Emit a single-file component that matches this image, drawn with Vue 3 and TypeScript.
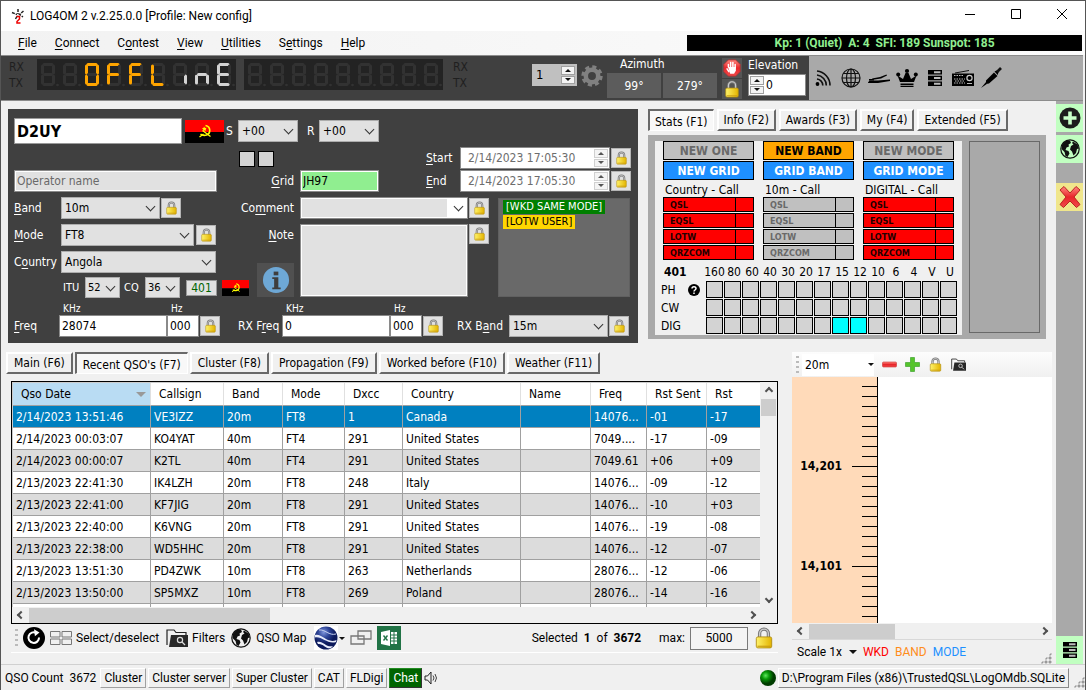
<script setup lang="ts">
import { ref } from 'vue'

type Accel = [string, string, string]

const menu: Accel[] = [
  ['', 'F', 'ile'],
  ['', 'C', 'onnect'],
  ['C', 'o', 'ntest'],
  ['', 'V', 'iew'],
  ['', 'U', 'tilities'],
  ['S', 'e', 'ttings'],
  ['', 'H', 'elp'],
]

const segmentPaths: Record<string, string> = {
  a: 'M3 1.5H11',
  b: 'M12.5 3V10',
  c: 'M12.5 13V20',
  d: 'M3 21.5H11',
  e: 'M1.5 13V20',
  f: 'M1.5 3V10',
  g: 'M3.5 11.5H10.5',
}
const segmentNames = Object.keys(segmentPaths)
const glyphs: Record<string, string> = { O: 'abcdef', F: 'aefg', L: 'def', i: 'c', n: 'ceg', E: 'adefg', ' ': '' }

interface Digit { on: string; color: string }
const toDigits = (text: string): Digit[] =>
  text.split('').map((ch) => ({ on: glyphs[ch] ?? '', color: ch === 'i' || ch === 'n' || ch === 'E' ? '#d3d3d3' : '#ffa500' }))
const displays: Digit[][] = [toDigits('  OFFLinE'), toDigits('         ')]

const tools = [
  { id: 'i-feed', name: 'Cluster feed' },
  { id: 'i-globe', name: 'Web' },
  { id: 'i-key', name: 'Keyer' },
  { id: 'i-crown', name: 'Awards' },
  { id: 'i-server', name: 'Server' },
  { id: 'i-radio', name: 'Radio' },
  { id: 'i-jack', name: 'Audio' },
]

const statTabs = ['Stats (F1)', 'Info (F2)', 'Awards (F3)', 'My (F4)', 'Extended (F5)']
const logTabs = ['Main (F6)', "Recent QSO's (F7)", 'Cluster (F8)', 'Propagation (F9)', 'Worked before (F10)', 'Weather (F11)']
const statTab = ref(0)
const logTab = ref(1)

const statColumns = [
  { head: 'NEW ONE', headClass: 'off', grid: 'NEW GRID', label: 'Country - Call', hit: true },
  { head: 'NEW BAND', headClass: 'new', grid: 'GRID BAND', label: '10m - Call', hit: false },
  { head: 'NEW MODE', headClass: 'off', grid: 'GRID MODE', label: 'DIGITAL - Call', hit: true },
]
const confirmations = ['QSL', 'EQSL', 'LOTW', 'QRZCOM']
const bands = ['160', '80', '60', '40', '30', '20', '17', '15', '12', '10', '6', '4', 'V', 'U']
const modeRows = [
  { name: 'PH', worked: [] as number[] },
  { name: 'CW', worked: [] as number[] },
  { name: 'DIG', worked: [7, 8] },
]

const columns = ['Qso Date', 'Callsign', 'Band', 'Mode', 'Dxcc', 'Country', 'Name', 'Freq', 'Rst Sent', 'Rst']
const rows: string[][] = [
  ['2/14/2023 13:51:46', 'VE3IZZ', '20m', 'FT8', '1', 'Canada', '', '14076...', '-01', '-17'],
  ['2/14/2023 00:03:07', 'KO4YAT', '40m', 'FT4', '291', 'United States', '', '7049....', '-17', '-09'],
  ['2/14/2023 00:00:07', 'K2TL', '40m', 'FT4', '291', 'United States', '', '7049.61', '+06', '+09'],
  ['2/13/2023 22:41:30', 'IK4LZH', '20m', 'FT8', '248', 'Italy', '', '14076...', '-09', '-12'],
  ['2/13/2023 22:41:00', 'KF7JIG', '20m', 'FT8', '291', 'United States', '', '14076...', '-10', '+03'],
  ['2/13/2023 22:40:00', 'K6VNG', '20m', 'FT8', '291', 'United States', '', '14076...', '-19', '-08'],
  ['2/13/2023 22:38:00', 'WD5HHC', '20m', 'FT8', '291', 'United States', '', '14076...', '-12', '-07'],
  ['2/13/2023 13:51:30', 'PD4ZWK', '10m', 'FT8', '263', 'Netherlands', '', '28076...', '-12', '-06'],
  ['2/13/2023 13:50:00', 'SP5MXZ', '10m', 'FT8', '269', 'Poland', '', '28076...', '-14', '-16'],
  ['', '', '', '', '', '', '', '', '', ''],
]
const selected = ref(0)

const ticks = Array.from({ length: 24 }, (_, i) => ({ label: i === 8 ? '14,201' : i === 18 ? '14,101' : '' }))

const statusButtons = ['Cluster', 'Cluster server', 'Super Cluster', 'CAT', 'FLDigi']

const callsign = ref('D2UY')
const operator = ref('')
const grid = ref('JH97')
const comment = ref('')
const note = ref('')
const startAt = ref('2/14/2023 17:05:30')
const endAt = ref('2/14/2023 17:05:30')
const freq = ref('28074')
const freqHz = ref('000')
const rxFreq = ref('0')
const rxFreqHz = ref('000')
const rotator = ref('1')
const elevation = ref('0')
const maxRows = ref('5000')
</script>

<template>
  <div class="window">
    <svg class="defs" aria-hidden="true">
      <defs>
        <linearGradient id="g-gold" x1="0" x2="1"><stop offset="0" stop-color="#fff36a" /><stop offset="1" stop-color="#e3b400" /></linearGradient>
        <linearGradient id="g-red" x1="0" x2="0" y1="0" y2="1"><stop offset="0" stop-color="#ff8a80" /><stop offset="0.5" stop-color="#e8262b" /><stop offset="1" stop-color="#f04a4a" /></linearGradient>
        <radialGradient id="g-led" cx="0.35" cy="0.35"><stop offset="0" stop-color="#5ee85e" /><stop offset="0.45" stop-color="#089a08" /><stop offset="1" stop-color="#003c00" /></radialGradient>
        <radialGradient id="g-blue" cx="0.4" cy="0.25"><stop offset="0" stop-color="#7f96dc" /><stop offset="0.5" stop-color="#2c4396" /><stop offset="1" stop-color="#0c1a5c" /></radialGradient>
        <symbol id="i-lock" viewBox="0 0 16 20">
          <path d="M4 10V6a4 4 0 0 1 8 0v4" fill="none" stroke="#777" stroke-width="3" />
          <path d="M4 10V6a4 4 0 0 1 8 0v4" fill="none" stroke="#ccc" stroke-width="1.2" />
          <rect x="1" y="9" width="14" height="10" rx="1.5" fill="url(#g-gold)" stroke="#b08c10" stroke-width="0.8" />
          <path d="M2 17.500H14" stroke="#c99a10" stroke-width="1" />
        </symbol>
        <symbol id="i-angola" viewBox="0 0 39 23">
          <path d="M0 0H39V12H0z" fill="#f00" /><path d="M0 12H39V23H0z" fill="#000" />
          <g fill="none" stroke="#ff0"><path d="M20.500 5.500c5.500 1 5.500 8 1 9.500c-2 .6-4.500 .2-6-1" stroke-width="1.600" /><path d="M14.500 17l4-3M17.500 10.500l8 6" stroke-width="1.300" /></g>
          <path d="M19 6.500l1 1.400 1.600-.1-.9 1.400.5 1.600-1.600-.5-1.300 1v-1.700l-1.400-1 1.600-.5z" fill="#ff0" />
        </symbol>
        <symbol id="i-feed" viewBox="0 0 22 22">
          <g fill="none" stroke="#111" stroke-width="1.600"><path d="M5 4a14.500 14.500 0 0 1 13 14.500" /><path d="M5 8a10.500 10.500 0 0 1 9.300 10.500" /><path d="M5 12a6.500 6.500 0 0 1 5.800 6.500" /></g><circle cx="5.500" cy="17" r="1.900" />
        </symbol>
        <symbol id="i-globe" viewBox="0 0 22 22">
          <g fill="none" stroke="#111" stroke-width="1.200"><circle cx="11" cy="11" r="9" /><ellipse cx="11" cy="11" rx="4.500" ry="9" /><path d="M11 2V20M2 11H20M3.500 6.500H18.500M3.500 15.500H18.500" /></g>
        </symbol>
        <symbol id="i-key" viewBox="0 0 22 22"><path d="M0 15.500L1.500 13.500H10L22 12.500V14L10 16H0z" /><path d="M4 11.500L12 10 18.500 7.500 19 8.500 13 11.500 5 12.800zM1 12h5v1.500H1z" /></symbol>
        <symbol id="i-crown" viewBox="0 0 22 22"><path d="M4 15L1.500 8.500 7 12 9.500 6h3L15 12l5.500-3.500L18 15z" /><path d="M4.500 16.500H17.500V18H4.500zM4.500 18.800H17.500V20H4.500z" /><circle cx="11" cy="4" r="2.100" /><circle cx="2.200" cy="7.500" r="2" /><circle cx="19.800" cy="7.500" r="2" /></symbol>
        <symbol id="i-server" viewBox="0 0 22 22"><path d="M4 3H18V7.500H4zM4 8.800H18V13.200H4zM4 14.500H18V19H4z" /><path d="M10 4.300H16.500V6.200H10zM10 10.100H16.500V12H10zM10 15.800H16.500V17.700H10z" fill="#bbb" /></symbol>
        <symbol id="i-radio" viewBox="0 0 22 22"><path d="M0 6.500H22V19H0z" /><path d="M3 6L17 3.500" stroke="#111" /><circle cx="17.500" cy="11" r="2.600" fill="none" stroke="#ccc" stroke-width="1.200" /><path d="M2 8.500H12M2 12H13M3 14H13M2 16H13" stroke="#bbb" stroke-dasharray="1.500 1" /><path d="M15 16.500H20" stroke="#bbb" /></symbol>
        <symbol id="i-jack" viewBox="0 0 22 22"><path d="M1 21l5-6 1.500 1.500zM6 13.500L14 5.500l3.500 3.500L9 16.500 6 17zM14.500 4.500l2-1 2 1.800-.8 2.700z" /><path d="M17 5L21 1" stroke="#111" stroke-width="2.600" /></symbol>
        <symbol id="i-earth" viewBox="0 0 22 22">
          <circle cx="11" cy="11" r="9.200" fill="none" stroke="#111" stroke-width="1.200" />
          <path d="M3 7C5 3 8 2 11 2.500L12 5 9.500 6.500 10 8.500 7.500 9.500 6.500 12 9.500 13 10.500 15.500 8.500 19 6.500 18 5.500 14 2.500 11zM14 3.500l4.500 3 1.500 4-2 .5-1 4-2.500 2.500-1.500-4-2-2 1-3.500 2.500-1.500-1.500-1.500z" fill="#111" />
        </symbol>
        <symbol id="i-folder" viewBox="0 0 22 20"><path d="M1 17V2H8L10 4.500H20V7" fill="none" stroke="#222" stroke-width="1.200" /><path d="M5 7H22V19H3z" fill="#282828" /><circle cx="14" cy="12" r="2.600" fill="none" stroke="#ddd" stroke-width="1.200" /><path d="M16 14L19 17" stroke="#ddd" stroke-width="1.300" /></symbol>
        <symbol id="i-gear" viewBox="0 0 22 22"><circle cx="11" cy="11" r="6.200" fill="none" stroke="#808080" stroke-width="4.500" /><circle cx="11" cy="11" r="9" fill="none" stroke="#808080" stroke-width="3.400" stroke-dasharray="4 3.069" /></symbol>
      </defs>
    </svg>

    <header class="title">
      <svg class="logo" viewBox="0 0 14 16"><path d="M7 1V6M1 4.500L6 6.500M12.500 3L8.500 6.500 12 9M4.500 11L6.500 7.500" fill="none" stroke="#222" stroke-width="1.500" stroke-dasharray="3 1" /><path d="M5.500 8.500H8.500V11L6 13.500V15H9.500" fill="none" stroke="#e00" stroke-width="1.500" /></svg>
      <span>LOG4OM 2 v.2.25.0.0 [Profile: New config]</span>
      <div class="caption">
        <button aria-label="Minimize"><svg viewBox="0 0 12 12"><path d="M1 6.500H11" /></svg></button>
        <button aria-label="Maximize"><svg viewBox="0 0 12 12"><path d="M1.500 1.500H10.500V10.500H1.500z" /></svg></button>
        <button aria-label="Close"><svg viewBox="0 0 12 12"><path d="M1 1L11 11M11 1L1 11" /></svg></button>
      </div>
    </header>

    <nav class="menu">
      <button v-for="m in menu" :key="m.join('')">{{ m[0] }}<u>{{ m[1] }}</u>{{ m[2] }}</button>
      <div class="solar">Kp: 1 (Quiet)&nbsp; A: 4&nbsp; SFI: 189 Sunspot: 185</div>
    </nav>

    <section class="toolbar">
      <div class="rig">
        <div class="rxtx"><span>RX</span><span>TX</span></div>
        <svg v-for="(d, di) in displays" :key="di" class="lcd" viewBox="0 0 199 31">
          <g v-for="(digit, i) in d" :key="i" :transform="`translate(${4 + i * 22} 4)`">
            <path v-for="s in segmentNames" :key="s" :d="segmentPaths[s]" :stroke="digit.on.includes(s) ? digit.color : '#323232'" stroke-width="3" stroke-linecap="round" />
            <circle cx="16.500" cy="22" r="1.300" fill="#323232" />
          </g>
        </svg>
        <div class="rxtx right"><span>RX</span><span>TX</span></div>
        <div class="spin rotator"><input v-model="rotator" aria-label="Rotator"><span class="updown"><button aria-label="Up" class="up" /><button aria-label="Down" class="down" /></span></div>
        <button class="plain gear" aria-label="Rotator settings"><svg><use href="#i-gear" /></svg></button>
        <div class="azimuth">
          <span>Azimuth</span>
          <div><output>99°</output><output>279°</output></div>
        </div>
        <div class="stops">
          <button aria-label="Stop"><svg viewBox="0 0 20 20"><path d="M6 1H14L19 6V14L14 19H6L1 14V6z" fill="url(#g-red)" stroke="#b33" /><path d="M6 9V6M8.500 9V4M11 9V4M13.500 10V6M4.500 11l2 3" stroke="#fff" stroke-width="1.700" stroke-linecap="round" /><path d="M5.500 9H14.300V13l-2 3.500H8z" fill="#fff" /></svg></button>
          <button aria-label="Lock rotator"><svg><use href="#i-lock" /></svg></button>
        </div>
        <div class="elevation">
          <label for="elev">Elevation</label>
          <div class="spin elev"><span class="updown"><button aria-label="Up" class="up" /><button aria-label="Down" class="down" /></span><input id="elev" v-model="elevation"></div>
        </div>
      </div>
      <div class="tools">
        <button v-for="t in tools" :key="t.id" class="plain" :aria-label="t.name"><svg><use :href="`#${t.id}`" /></svg></button>
      </div>
    </section>

    <main class="main">
      <div class="content">
        <div class="upper">
          <form class="entry" @submit.prevent>
            <div class="line call">
              <input v-model="callsign" class="callsign" aria-label="Callsign">
              <svg class="flag"><use href="#i-angola" /></svg>
              <label for="rs">S</label>
              <span class="sel w60"><select id="rs"><option>+00</option></select></span>
              <label for="rr" class="r">R</label>
              <span class="sel w60"><select id="rr"><option>+00</option></select></span>
            </div>

            <div class="body">
              <div class="leftcol">
                <input v-model="operator" class="box operator" placeholder="Operator name" aria-label="Operator name">
                <div class="line"><label class="lab" for="band"><u>B</u>and</label><span class="sel w99"><select id="band"><option>10m</option></select></span><button class="lock" aria-label="Lock band"><svg><use href="#i-lock" /></svg></button></div>
                <div class="line"><label class="lab" for="mode"><u>M</u>ode</label><span class="sel w133"><select id="mode"><option>FT8</option></select></span><button class="lock far" aria-label="Lock mode"><svg><use href="#i-lock" /></svg></button></div>
                <div class="line"><label class="lab" for="country">C<u>o</u>untry</label><span class="sel w155"><select id="country"><option>Angola</option></select></span></div>
                <div class="line zones">
                  <label for="itu">ITU</label><span class="sel w35"><select id="itu"><option>52</option></select></span>
                  <label for="cq" class="cq">CQ</label><span class="sel w35"><select id="cq"><option>36</option></select></span>
                  <output class="dxcc">401</output>
                  <svg class="miniflag" viewBox="0 0 39 23" preserveAspectRatio="none"><use href="#i-angola" width="39" height="23" /></svg>
                </div>
              </div>

              <div class="rightcol">
                <div class="times">
                  <div class="gridside">
                    <div class="ticks"><input type="checkbox" aria-label="Sent"><input type="checkbox" aria-label="Received"></div>
                    <div class="line"><label class="rlab" for="grid"><u>G</u>rid</label><input id="grid" v-model="grid" class="box gridbox"></div>
                  </div>
                  <div class="dates">
                    <div class="line"><label for="start"><u>S</u>tart</label><div class="spin date"><input id="start" v-model="startAt"><span class="updown"><button aria-label="Up" class="up" /><button aria-label="Down" class="down" /></span></div><button class="lock" aria-label="Lock start"><svg><use href="#i-lock" /></svg></button></div>
                    <div class="line"><label for="end"><u>E</u>nd</label><div class="spin date"><input id="end" v-model="endAt"><span class="updown"><button aria-label="Up" class="up" /><button aria-label="Down" class="down" /></span></div><button class="lock" aria-label="Lock end"><svg><use href="#i-lock" /></svg></button></div>
                  </div>
                </div>
                <div class="notes">
                  <div class="notefields">
                    <div class="line"><label class="rlab" for="comment">Co<u>m</u>ment</label><span class="sel combo"><input id="comment" v-model="comment"></span><button class="lock" aria-label="Lock comment"><svg><use href="#i-lock" /></svg></button></div>
                    <div class="noterow">
                      <div class="notelab"><label class="rlab" for="note"><u>N</u>ote</label><button class="info" aria-label="Information"><svg viewBox="0 0 30 30"><circle cx="15" cy="15" r="14" fill="#6ea8d6" /><path d="M15 6V10" stroke="#3e3e3e" stroke-width="5" /><path d="M11 12H17.500V23H20V25H11V23H13V14H11z" fill="#3e3e3e" /></svg></button></div>
                      <textarea id="note" v-model="note" />
                      <button class="lock" aria-label="Lock note"><svg><use href="#i-lock" /></svg></button>
                    </div>
                  </div>
                  <div class="flags"><span class="wkd">[WKD SAME MODE]</span><span class="lotw">[LOTW USER]</span></div>
                </div>
              </div>
            </div>

            <div class="freqs">
              <label class="lab" for="freq"><u>F</u>req</label>
              <div class="unit"><label for="freq">KHz</label><input id="freq" v-model="freq" class="box khz"></div>
              <div class="unit"><label for="freqhz">Hz</label><input id="freqhz" v-model="freqHz" class="box hz"></div>
              <button class="lock" aria-label="Lock frequency"><svg><use href="#i-lock" /></svg></button>
              <label class="rx" for="rxfreq">RX F<u>r</u>eq</label>
              <div class="unit"><label for="rxfreq">KHz</label><input id="rxfreq" v-model="rxFreq" class="box khz"></div>
              <div class="unit"><label for="rxhz">Hz</label><input id="rxhz" v-model="rxFreqHz" class="box hz"></div>
              <button class="lock" aria-label="Lock RX frequency"><svg><use href="#i-lock" /></svg></button>
              <label class="rxband" for="rxband">RX B<u>a</u>nd</label>
              <span class="sel w99"><select id="rxband"><option>15m</option></select></span>
              <button class="lock" aria-label="Lock RX band"><svg><use href="#i-lock" /></svg></button>
            </div>
          </form>

          <section class="stats">
            <div class="tabs"><button v-for="(t, i) in statTabs" :key="t" :class="{ active: i === statTab }" @click="statTab = i">{{ t }}</button></div>
            <div class="statpanel">
              <div class="statinner">
                <div class="statcols">
                  <div v-for="c in statColumns" :key="c.head" class="statcol">
                    <div class="badge" :class="c.headClass">{{ c.head }}</div>
                    <div class="badge gridnew">{{ c.grid }}</div>
                    <div class="statlabel">{{ c.label }}</div>
                    <div v-for="q in confirmations" :key="q" class="conf" :class="{ hit: c.hit }"><span>{{ q }}</span><i /></div>
                  </div>
                </div>
                <div class="matrix">
                  <b class="entity">401</b>
                  <span v-for="b in bands" :key="b" class="bandhead">{{ b }}</span>
                  <template v-for="r in modeRows" :key="r.name">
                    <span class="modehead">{{ r.name }}<svg v-if="r.name === 'PH'" viewBox="0 0 12 12"><circle cx="6" cy="6" r="6" /><path d="M4 4.500C4 2 8 2 8 4.500C8 6 6 6 6 7.500M6 8.500V10" fill="none" stroke="#fff" stroke-width="1.500" /></svg></span>
                    <i v-for="(b, i) in bands" :key="b" class="cell" :class="{ worked: r.worked.includes(i) }" />
                  </template>
                </div>
              </div>
              <div class="photo" />
            </div>
          </section>
        </div>

        <div class="lower">
          <section class="log">
            <div class="tabs wide"><button v-for="(t, i) in logTabs" :key="t" :class="{ active: i === logTab }" @click="logTab = i">{{ t }}</button></div>
            <div class="gridbox-outer">
              <div class="gridtop">
                <div class="tablewrap">
                  <table>
                    <colgroup><col v-for="(c, i) in columns" :key="c" :class="`c${i}`"></colgroup>
                    <thead><tr><th v-for="c in columns" :key="c">{{ c }}</th></tr></thead>
                    <tbody>
                      <tr v-for="(r, i) in rows" :key="i" :class="{ selected: i === selected }" @click="selected = i"><td v-for="(v, j) in r" :key="j">{{ v }}</td></tr>
                    </tbody>
                  </table>
                </div>
                <div class="vscroll"><span class="arr n" /><span class="thumb" /><span class="arr s" /></div>
              </div>
              <div class="hscroll"><span class="arr w" /><span class="thumb" /><span class="arr e" /></div>
            </div>
            <div class="logtools">
              <i class="grip" />
              <button class="plain" aria-label="Refresh"><svg viewBox="0 0 24 24" class="s22"><circle cx="12" cy="12" r="12" /><path d="M17.500 11.500a5.800 5.800 0 1 1-3-5" fill="none" stroke="#fff" stroke-width="2.200" /><path d="M12 2.500l6 3.500-5 4z" fill="#fff" /></svg></button>
              <button class="plain"><svg viewBox="0 0 22 16" class="s22"><path d="M.5 1.500H10V7H.5zM12 1.500H21.500V7H12zM.5 9H10V14.500H.5zM12 9H21.500V14.500H12z" fill="none" stroke="#777" /></svg>Select/deselect</button>
              <button class="plain filters"><svg class="s22"><use href="#i-folder" /></svg>Filters</button>
              <button class="plain map"><svg class="s22"><use href="#i-earth" /></svg>QSO Map</button>
              <button class="plain ge" aria-label="Google Earth"><svg viewBox="0 0 24 24" class="s24"><rect width="24" height="24" fill="#fff" /><circle cx="12" cy="12" r="11.500" fill="url(#g-blue)" /><path d="M1 9C8 7 13 18 22.500 14L22 16C14 19 8 10 1 11.500zM3 16C9 14 12 22 19 20L17 22C12 23.500 9 17 4 18z" fill="#e8ecfa" /><path d="M5 4c6-1 10 6 17 4" fill="none" stroke="#c9d3f0" /></svg><i class="dd" /></button>
              <button class="plain" aria-label="Windows"><svg viewBox="0 0 22 16" class="s22"><path d="M8 1H21V9H8zM1 6H14V14H1z" fill="#f0f0f0" stroke="#777" stroke-width="1.300" /></svg></button>
              <button class="plain" aria-label="Export to Excel"><svg viewBox="0 0 24 24" class="s24"><rect width="24" height="24" fill="#217346" /><path d="M4 6L13 4V20L4 18zM14 6H20V18H14z" fill="#fff" /><path d="M6.500 9.500L10.500 14.500M10.500 9.500L6.500 14.500" stroke="#217346" stroke-width="1.400" /><path d="M17 6V18M14 9H20M14 12H20M14 15H20" stroke="#217346" /></svg></button>
              <span class="count">Selected&nbsp; <b>1</b>&nbsp; of&nbsp; <b>3672</b></span>
              <label for="max">max:</label>
              <input id="max" v-model="maxRows">
              <button class="plain" aria-label="Lock list"><svg class="biglock"><use href="#i-lock" /></svg></button>
            </div>
          </section>

          <section class="scope">
            <div class="scopebar">
              <i class="grip" />
              <span class="scopesel"><select aria-label="Scope band"><option>20m</option></select><i class="dd" /></span>
              <button class="plain" aria-label="Zoom out"><svg viewBox="0 0 15 15"><rect x="0.500" y="5" width="14" height="5" rx="1" fill="url(#g-red)" stroke="#c33" stroke-width="0.600" /></svg></button>
              <button class="plain" aria-label="Zoom in"><svg viewBox="0 0 15 15"><path d="M5.500.5H9.500V5.500H14.500V9.500H9.500V14.500H5.500V9.500H.5V5.500H5.500z" fill="#55c42b" stroke="#2f9a20" stroke-width="0.600" /></svg></button>
              <button class="plain lk" aria-label="Lock scope"><svg><use href="#i-lock" /></svg></button>
              <button class="plain" aria-label="Search"><svg><use href="#i-folder" /></svg></button>
            </div>
            <div class="plot"><div class="scale"><div v-for="(t, i) in ticks" :key="i" class="tick" :class="{ major: t.label }"><span v-if="t.label">{{ t.label }}</span></div></div></div>
            <div class="hscroll"><span class="arr w" /><span class="thumb" /><span class="arr e" /></div>
            <div class="scopefoot"><button class="plain">Scale 1x<i class="dd" /></button><span class="wkdt">WKD</span><span class="bandt">BAND</span><span class="modet">MODE</span><i class="sizer" /></div>
          </section>
        </div>
      </div>

      <aside class="side">
        <button aria-label="Add QSO"><svg viewBox="0 0 22 22"><circle cx="11" cy="11" r="10.500" fill="#1c1c1c" /><path d="M11 4.500V17.500M4.500 11H17.500" stroke="#c8ffc8" stroke-width="3.600" /></svg></button>
        <button aria-label="Lookup"><svg><use href="#i-earth" /></svg></button>
        <button class="clear" aria-label="Clear"><svg viewBox="0 0 22 22"><path d="M1 4L5 .5 11 7 17 .5 21 4 15 11 21 18.500 17.500 21.500 11 15 4.500 21.500 1 18.500 7 11z" fill="url(#g-red)" stroke="#b22" /></svg></button>
        <button class="last" aria-label="Server"><svg><use href="#i-server" /></svg></button>
      </aside>
    </main>

    <footer class="status">
      <span class="qcount">QSO Count&nbsp; 3672</span>
      <button v-for="s in statusButtons" :key="s">{{ s }}</button>
      <button class="chat">Chat</button>
      <svg class="speaker" viewBox="0 0 14 14"><path d="M1 5H3.500L7 1V13L3.500 9H1z" fill="#eee" stroke="#222" /><path d="M9 4.500q2 2.500 0 5M11 3q3 4 0 8" fill="none" stroke="#444" /></svg>
      <svg class="led" viewBox="0 0 16 16"><circle cx="8" cy="8" r="8" fill="url(#g-led)" /></svg>
      <button class="path">D:\Program Files (x86)\TrustedQSL\LogOMdb.SQLite</button>
      <i class="sizer" />
    </footer>
  </div>
</template>

<style>
body { background: #f0f0f0; }
</style>

<style scoped>
.window, .window * { box-sizing: border-box; }
.window {
  --ui: "DejaVu Sans Condensed", "DejaVu Sans", sans-serif;
  --seg: Roboto, "Open Sans", sans-serif;
  display: flex; flex-direction: column; min-height: 100vh; overflow: hidden;
  background: #f0f0f0; color: #000; font: 12px/16px var(--ui);
  border: solid #555; border-width: 1px 1px 0 1px;
}
.defs { position: absolute; width: 0; height: 0; }
button, input, select, textarea { font: inherit; color: inherit; margin: 0; border-radius: 0; outline: none; }
button { padding: 0; cursor: default; white-space: nowrap; }
u { text-underline-offset: 2px; }
.plain { border: 0; background: none; display: flex; align-items: center; }

.title { height: 30px; background: #fff; display: flex; align-items: center; padding-left: 10px; font-family: var(--seg); flex: none; }
.logo { width: 14px; height: 16px; margin-right: 5px; }
.caption { margin-left: auto; display: flex; height: 100%; }
.caption button { width: 46px; border: 0; background: none; }
.caption svg { width: 12px; height: 12px; fill: none; stroke: #000; }

.menu { height: 24px; flex: none; display: flex; align-items: center; gap: 18px; padding-left: 17px; background: linear-gradient(90deg, #f2f2f2, #fcfcfc); font-family: var(--seg); }
.menu button { border: 0; background: none; }
.solar { margin-left: auto; margin-right: 3px; width: 37%; height: 16px; background: #000; color: #90ee90; font-weight: bold; text-align: center; white-space: nowrap; }

.toolbar { height: 46px; flex: none; display: flex; background: #a9a9a9; border: solid #8c8c8c; border-width: 1px 0; margin-right: 2px; }
.rig { display: flex; width: 808px; flex: none; background: #404040; color: #fff; padding-left: 8px; }
.rxtx { width: 28px; display: flex; flex-direction: column; padding-top: 3px; color: #1f1f1f; flex: none; }
.rxtx.right { width: 87px; padding-left: 8px; margin-left: -6px; }
.lcd { width: 199px; height: 31px; background: #232323; margin: 3px 8px 0 0; flex: none; fill: none; }
.spin { display: flex; background: #fff; border: 1px solid #8a8a8a; height: 22px; padding: 1px; }
.spin input { flex: 1; min-width: 0; border: 0; padding: 0 2px; background: transparent; color: #000; }
.updown { width: 14px; display: flex; flex-direction: column; gap: 1px; flex: none; }
.updown button { flex: 1; min-height: 0; border: 1px solid #a0a0a0; background: #f4f4f4; display: flex; align-items: center; justify-content: center; }
.updown button::after { content: ""; border: 3px solid transparent; }
.updown .up::after { border-width: 0 3px 3px; border-bottom-color: #111; }
.updown .down::after { border-width: 3px 3px 0; border-top-color: #111; }
.rotator { width: 45px; margin-top: 8px; background: #c0c0c0; border-color: #c0c0c0; font-size: 13px; }
.gear { width: 22px; margin: 9px 4px 0; height: 22px; }
.gear svg { width: 22px; height: 22px; }
.azimuth { width: 112px; }
.azimuth > span { display: block; padding-left: 13px; line-height: 17px; }
.azimuth div { display: flex; gap: 2px; }
.azimuth output { width: 54px; height: 25px; background: #5c5c5c; text-align: center; line-height: 26px; }
.stops { width: 20px; margin: 2px 6px 0 3px; display: flex; flex-direction: column; gap: 1px; flex: none; }
.stops button { width: 20px; height: 20px; border: 0; background: #555; display: flex; align-items: center; justify-content: center; }
.stops svg { width: 18px; height: 18px; }
.elevation { width: 58px; }
.elevation label { display: block; line-height: 18px; }
.tools { display: flex; align-items: center; gap: 6px; padding-left: 3px; }
.tools svg { width: 22px; height: 22px; }

.main { flex: 1; display: flex; min-height: 0; }
.content { flex: 1; min-width: 0; display: flex; flex-direction: column; }
.upper { display: flex; gap: 10px; padding: 8px 10px 0 7px; }

.entry { flex: 1; min-width: 0; background: #404040; color: #fff; padding: 9px 6px 6px; }
.line { display: flex; align-items: center; height: 22px; white-space: nowrap; }
.line.call { height: 26px; }
.callsign { width: 168px; height: 26px; border: 1px solid #999; padding: 0 2px; font-size: 16px; font-weight: bold; color: #000; }
.flag { width: 39px; height: 23px; margin: 0 2px 0 3px; }
.call label { width: 12px; }
.call label.r { margin-left: 9px; }
.sel { position: relative; display: block; height: 22px; flex: none; }
.sel select, .sel input { appearance: none; width: 100%; height: 100%; background: #e1e1e1; border: 1px solid #adadad; color: #000; padding: 0 3px; }
.sel::after { content: ""; position: absolute; right: 6px; top: 6px; width: 6px; height: 6px; border: solid #333; border-width: 0 1px 1px 0; transform: rotate(45deg); pointer-events: none; }
.w60 { width: 60px; } .w99 { width: 99px; } .w133 { width: 133px; } .w155 { width: 155px; } .w35 { width: 35px; }
.w35 select { padding: 0 2px; }
.lock { width: 20px; height: 20px; margin-left: 1px; border: 1px solid #b4b4b4; background: #e1e1e1; display: flex; align-items: center; justify-content: center; flex: none; }
.lock.far { margin-left: 2px; }
.lock svg { width: 11px; height: 14px; }
.box { height: 22px; border: 1px solid #8a8a8a; background: #fff; color: #000; padding: 0 2px; }
.body { display: flex; margin-top: 3px; }
.leftcol { width: 225px; flex: none; display: flex; flex-direction: column; gap: 5px; padding-top: 23px; }
.operator { width: 203px; background: #e1e1e1; box-shadow: inset 0 0 0 1px #fff; }
.operator::placeholder { color: #696969; }
.lab { width: 47px; flex: none; }
.zones { margin-top: -1px; height: 21px; padding-left: 49px; font-size: 11px; }
.zones label { width: 22px; flex: none; }
.zones label.cq { margin-left: 4px; width: 21px; }
.zones .sel { height: 21px; }
.dxcc { width: 31px; height: 16px; line-height: 15px; margin: 0 5px 0 6px; flex: none; background: #e1e1e1; border: 1px solid #999; color: #006400; text-align: center; font-size: 12px; }
.miniflag { width: 27px; height: 16px; flex: none; }
.rightcol { flex: 1; min-width: 0; }
.times { display: flex; justify-content: space-between; padding-right: 1px; }
.ticks { display: flex; gap: 3px; height: 23px; padding-top: 4px; }
.ticks input { appearance: none; width: 16px; height: 16px; background: #d3d3d3; border: 1px solid #000; }
.rlab { width: 61px; padding-right: 6px; text-align: right; flex: none; display: flex; justify-content: flex-end; white-space: nowrap; }
.gridbox { width: 79px; background: #90ee90; box-shadow: inset 0 0 0 1px #fff; }
.dates { display: flex; flex-direction: column; gap: 1px; }
.dates label { width: 34px; }
.date { width: 150px; }
.date input { color: #6d6d6d; padding-left: 6px; }
.date .updown button { border-color: #d0d0d0; }
.date .updown .up::after { border-bottom-color: #555; }
.date .updown .down::after { border-top-color: #555; }
.notes { display: flex; justify-content: space-between; margin-top: 5px; padding-right: 2px; }
.combo { width: 168px; }
.combo input { background: #e1e1e1; border-color: #8a8a8a; box-shadow: inset 0 0 0 1px #fff, inset -20px 0 0 #fff; }
.noterow { display: flex; margin-top: 5px; }
.notelab { width: 61px; display: flex; flex-direction: column; justify-content: space-between; }
.notelab .rlab { line-height: 22px; }
.info { align-self: flex-end; margin-right: 6px; width: 37px; height: 34px; border: 0; background: #505050; display: flex; align-items: center; justify-content: center; flex: none; }
.info svg { width: 28px; height: 28px; }
textarea { width: 168px; height: 73px; resize: none; border: 1px solid #8a8a8a; background: #e1e1e1; box-shadow: inset 0 0 0 1px #fff; padding: 2px; }
.flags { width: 132px; height: 99px; margin-top: 1px; background: #696969; border: 1px solid #606060; padding: 1px 4px; display: flex; flex-direction: column; align-items: flex-start; gap: 1px; font-size: 11px; line-height: 14px; }
.flags span { padding: 0 3px; white-space: nowrap; }
.wkd { background: #008000; } .lotw { background: #ffd700; color: #000; }
.freqs { display: flex; align-items: flex-end; margin-top: 4px; white-space: nowrap; }
.freqs > label { line-height: 22px; }
.freqs .lab { width: 45px; }
.unit { display: flex; flex-direction: column; }
.unit label { font-size: 10px; line-height: 13px; padding-left: 4px; }
.khz { width: 108px; } .hz { width: 32px; }
.freqs .lock { margin-bottom: 1px; }
.rx { width: 44px; margin-left: 18px; }
.rxband { width: 52px; margin-left: 14px; }

.stats { width: 398px; flex: none; }
.tabs { display: flex; gap: 3px; height: 22px; }
.tabs button { height: 22px; padding: 0 5px; background: #f0f0f0; border: 2px solid; border-color: #fff #696969 #696969 #fff; line-height: 16px; }
.tabs.wide { gap: 2px; }
.tabs.wide button { padding: 0 6px; }
.tabs button.active { border-color: #696969 #fff #fff #696969; background: #f8f8f8; border-width: 2px 1px 1px 2px; padding-top: 2px; }
.statpanel { display: flex; justify-content: space-between; margin-top: 4px; height: 204px; padding: 6px 6px 4px 7px; background: #a9a9a9; }
.statinner { width: 307px; background: #f0f0f0; }
.photo { width: 71px; height: 192px; border: 1px solid #696969; }
.statcols { display: flex; gap: 9px; padding-left: 8px; }
.statcol { width: 91px; }
.badge { height: 19px; border: 1px solid #000; margin-bottom: 1px; text-align: center; font-weight: bold; line-height: 18px; white-space: nowrap; }
.off { background: #c0c0c0; color: #696969; }
.new { background: #ffa500; }
.gridnew { background: #1e90ff; color: #fff; }
.statlabel { height: 16px; line-height: 19px; padding-left: 2px; white-space: nowrap; }
.conf { display: flex; height: 15px; border: 1px solid #000; margin-bottom: 1px; background: #c0c0c0; color: #696969; font-size: 9px; font-weight: bold; line-height: 14px; }
.conf.hit { background: #f00; color: #200; }
.conf span { flex: 1; padding-left: 6px; }
.conf i { width: 18px; border-left: 1px solid #000; }
.matrix { display: grid; grid-template-columns: 50px repeat(14, 17px); gap: 1px; grid-template-rows: 19px repeat(3, 17px); }
.entity { padding-left: 9px; line-height: 22px; }
.bandhead { display: flex; justify-content: center; line-height: 22px; }
.bandhead:not(:nth-child(2)) { padding-left: 3px; }
.modehead { display: flex; justify-content: space-between; align-items: center; padding: 0 5px 0 6px; }
.modehead svg { width: 12px; height: 12px; }
.cell { background: #d3d3d3; border: 1px solid #000; }
.cell.worked { background: #0ff; }

.lower { flex: 1; min-height: 0; display: flex; gap: 14px; padding: 9px 4px 0 5px; }
.log { flex: 1; min-width: 0; display: flex; flex-direction: column; }
.gridbox-outer { margin: 7px 0 0 5px; flex: 1; min-height: 0; display: flex; flex-direction: column; border: 1px solid #000; }
.gridtop { flex: 1; min-height: 0; display: flex; }
.tablewrap { flex: 1 1 0; min-width: 0; height: 225px; overflow: hidden; border-top: 1px solid #ccc; border-left: 1px solid #ccc; }
table { width: 100%; table-layout: fixed; border-spacing: 0; background: #fff; }
.c0 { width: 138px; } .c1 { width: 73px; } .c2 { width: 59px; } .c3 { width: 62px; } .c4 { width: 58px; }
.c6 { width: 70px; } .c7 { width: 56px; } .c8 { width: 60px; } .c9 { width: 53px; }
th { height: 23px; padding: 0 0 0 8px; text-align: left; font-weight: normal; white-space: nowrap; border-right: 1px solid #e0e0e0; border-bottom: 1px solid #a0a0a0; position: relative; }
th:first-child { background: #b9dcf3; }
th:first-child::after { content: ""; position: absolute; right: 4px; top: 9px; border: solid transparent; border-width: 5px 5px 0; border-top-color: #999; }
td { height: 22px; padding: 0 0 0 3px; white-space: nowrap; overflow: hidden; border-right: 1px solid #a0a0a0; border-bottom: 1px solid #a0a0a0; }
th:last-child, td:last-child { border-right: 0; }
tbody tr:nth-child(odd) { background: #dcdcdc; }
tbody tr.selected { background: #0080c0; color: #fff; }
.vscroll { width: 17px; display: flex; flex-direction: column; align-items: center; flex: none; }
.arr { width: 17px; height: 17px; display: flex; align-items: center; justify-content: center; flex: none; }
.arr::after { content: ""; box-sizing: border-box; width: 6px; height: 6px; border: solid #505050; border-width: 2px 0 0 2px; }
.arr.n::after { transform: rotate(45deg); } .arr.s::after { transform: rotate(225deg); }
.arr.w::after { transform: rotate(-45deg); } .arr.e::after { transform: rotate(135deg); }
.thumb { background: #cdcdcd; }
.vscroll .thumb { width: 15px; height: 17px; }
.vscroll .s { margin-top: auto; }
.hscroll { height: 16px; flex: none; display: flex; align-items: center; }
.hscroll .thumb { width: 241px; height: 15px; }
.hscroll .e { margin-left: auto; }
.gridbox-outer .hscroll { padding-right: 17px; }
.logtools { height: 29px; margin: 0 0 11px 5px; flex: none; display: flex; align-items: center; gap: 5px; border-bottom: 1px solid #fff; white-space: nowrap; font-family: var(--seg); }
.logtools .plain { gap: 4px; }
.filters, .ge { margin-left: 2px; }
.ge.plain { gap: 1px; }
.grip { width: 3px; height: 18px; background: repeating-linear-gradient(#bbb 0 2px, transparent 2px 5px); margin-left: 4px; flex: none; }
.s22 { width: 22px; height: 22px; } .s24 { width: 24px; height: 24px; }
.dd { border: solid transparent; border-width: 3px 3px 0; border-top-color: #111; display: block; width: 0; }
.count { margin-left: auto; margin-right: 13px; }
.logtools input { width: 58px; height: 23px; border: 1px solid #7a7a7a; background: #f4f4f4; text-align: center; }
.biglock { width: 18px; height: 22px; margin: 0 5px 0 2px; }

.scope { width: 260px; flex: none; display: flex; flex-direction: column; }
.scopebar { height: 25px; display: flex; align-items: center; gap: 8px; background: linear-gradient(#fdfdfd, #f0f0f0); }
.scopebar .grip { margin-right: -5px; }
.scopesel { display: flex; align-items: center; width: 72px; height: 22px; background: #fff; }
.scopesel select { appearance: none; flex: 1; min-width: 0; border: 0; background: none; padding-left: 3px; }
.scopebar svg { width: 15px; height: 15px; }
.plot { flex: 1; min-height: 0; background: #fff; }
.scale { width: 86px; height: 100%; background: #ffdab9; border-right: 1px solid #000; }
.tick { position: relative; height: 10px; margin-left: 70px; border-bottom: 1px solid #000; }
.tick.major { margin-left: 60px; }
.tick span { position: absolute; right: 35px; top: 1px; font-weight: bold; }
.scope .hscroll .thumb { width: 86px; }
.scopefoot { height: 25px; flex: none; display: flex; align-items: center; gap: 6px; border-top: 1px solid #d8d8d8; padding-left: 5px; font-family: var(--seg); }
.scopefoot .plain { gap: 7px; }
.scopefoot .plain .dd { border-width: 4px 4px 0; }
.wkdt { color: #f00; } .bandt { color: #ff8c1a; } .modet { color: #1e90ff; }
.sizer { margin-left: auto; align-self: flex-end; width: 12px; height: 12px; background: radial-gradient(#999 1px, transparent 2px) 0 0 / 4px 4px; clip-path: polygon(100% 0, 100% 100%, 0 100%); }

.side { width: 27px; margin-right: 2px; background: #a9a9a9; display: flex; flex-direction: column; padding-top: 3px; flex: none; }
.side button { height: 28px; border: 0; background: #c1ffc1; margin-bottom: 3px; display: flex; align-items: center; justify-content: center; }
.side svg { width: 22px; height: 22px; }
.side .clear { background: #f0e68c; margin-top: 17px; }
.side .last { margin-top: auto; margin-bottom: 0; }

.status { height: 26px; flex: none; display: flex; align-items: center; gap: 2px; border-top: 1px solid #d0d0d0; padding-left: 4px; font-family: var(--seg); white-space: nowrap; }
.qcount { margin-right: 2px; }
.status button { height: 20px; padding: 0 3px; background: #f0f0f0; border: 1px solid; border-color: #fff #a0a0a0 #a0a0a0 #fff; line-height: 16px; }
.status .chat { background: #006400; color: #fff; border-color: #228b22 #333 #333 #228b22; }
.speaker { width: 14px; height: 14px; }
.led { width: 16px; height: 16px; margin-left: auto; }
.status .path { border-color: #fff #888 #888 #fff; }
.status .sizer { margin-left: 2px; margin-bottom: 2px; }
</style>
